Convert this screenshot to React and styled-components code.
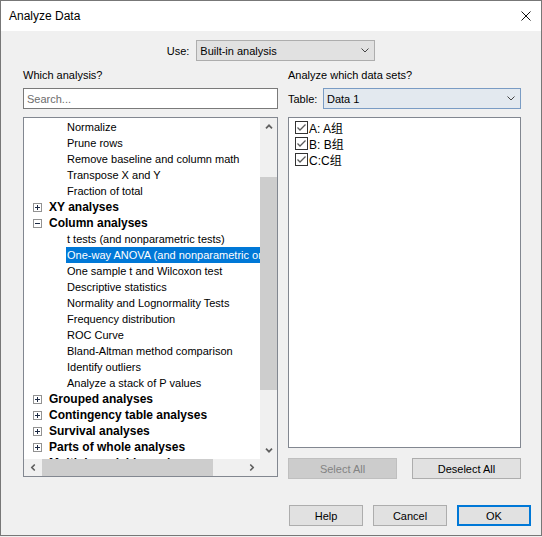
import React from 'react';
import styled, { createGlobalStyle } from 'styled-components';

const GlobalStyle = createGlobalStyle`
  html, body {
    margin: 0;
    padding: 0;
    background: #f0f0f0;
  }
  * { box-sizing: border-box; }
`;

const UI_FONT = '"Liberation Sans", "Noto Sans CJK SC", Arial, sans-serif';

const Dialog = styled.div`
  width: 542px;
  height: 536px;
  border: 1px solid #777777;
  background: #f0f0f0;
  display: flex;
  flex-direction: column;
  font-family: ${UI_FONT};
  font-size: 11px;
  color: #000;
`;

const TitleBar = styled.div`
  height: 30px;
  flex: none;
  background: #ffffff;
  display: flex;
  align-items: center;
  justify-content: space-between;
  padding: 0 10px 0 8px;
`;

const Title = styled.span`
  font-size: 12px;
  line-height: 16px;
`;

const CloseIcon = () => (
  <svg width="10" height="10" viewBox="0 0 10 10">
    <path d="M0.5 0.5 L9.5 9.5 M9.5 0.5 L0.5 9.5" stroke="#111" strokeWidth="1" fill="none" />
  </svg>
);

const Body = styled.div`
  flex: 1;
  display: flex;
  flex-direction: column;
`;

const UseRow = styled.div`
  margin-top: 9px;
  height: 21px;
  display: flex;
  align-items: center;
  justify-content: center;
  gap: 7px;
`;

const FieldLabel = styled.span`
  line-height: 16px;
  white-space: nowrap;
  flex: none;
  width: ${p => (p.$width ? `${p.$width}px` : 'auto')};
`;

const Combo = styled.div`
  height: 21px;
  width: ${p => (p.$width ? `${p.$width}px` : 'auto')};
  flex: ${p => (p.$width ? 'none' : '1')};
  display: flex;
  align-items: center;
  justify-content: space-between;
  padding: 0 5px 0 3px;
  background: ${p => (p.$focused ? '#e3e9ef' : '#e1e1e1')};
  border: 1px solid ${p => (p.$focused ? '#7a9cc4' : '#adadad')};
  line-height: 16px;
`;

const ComboArrow = () => (
  <svg width="8" height="5" viewBox="0 0 8 5">
    <path d="M0.5 0.5 L4 4 L7.5 0.5" stroke="#444" strokeWidth="1" fill="none" />
  </svg>
);

const Columns = styled.div`
  margin: 6px 0 0 22px;
  display: grid;
  grid-template-columns: 255px 233px;
  column-gap: 10px;
  align-items: start;
`;

const Column = styled.div`
  display: flex;
  flex-direction: column;
`;

const SectionLabel = styled.div`
  height: 16px;
  line-height: 16px;
`;

const SearchBox = styled.input`
  margin-top: 5px;
  height: 21px;
  width: 100%;
  border: 1px solid #7a7a7a;
  background: #fff;
  padding: 0 3px;
  font-family: ${UI_FONT};
  font-size: 11px;
  outline: none;
  &::placeholder { color: #6d6d6d; }
`;

const TableRow = styled.div`
  margin-top: 5px;
  height: 21px;
  display: flex;
  align-items: center;
`;

/* ---------- tree view ---------- */

const Tree = styled.div`
  margin-top: 8px;
  height: 360px;
  border: 1px solid #828790;
  background: #fff;
  display: grid;
  grid-template-columns: 1fr 17px;
  grid-template-rows: 1fr 17px;
  overflow: hidden;
`;

const TreeContent = styled.div`
  overflow: hidden;
  padding-top: 1px;
`;

const TreeRow = styled.div`
  height: 16px;
  display: flex;
  align-items: center;
  white-space: nowrap;
  padding-left: ${p => (p.$group ? '9px' : '42px')};
`;

const TreeLabel = styled.span`
  display: inline-block;
  height: 16px;
  line-height: 16px;
  padding: 0 2px 0 1px;
  font-weight: ${p => (p.$group ? 700 : 400)};
  font-size: ${p => (p.$group ? '12px' : '11px')};
  background: ${p => (p.$selected ? '#0078d7' : 'transparent')};
  color: ${p => (p.$selected ? '#ffffff' : '#000000')};
`;

const Expander = styled.span`
  width: 9px;
  height: 9px;
  flex: none;
  margin-right: 6px;
  border: 1px solid #929292;
  background: #fff;
  position: relative;
  &::before {
    content: '';
    position: absolute;
    left: 1px;
    top: 3px;
    width: 5px;
    height: 1px;
    background: #1c2a44;
  }
  &::after {
    content: '';
    display: ${p => (p.$open ? 'none' : 'block')};
    position: absolute;
    left: 3px;
    top: 1px;
    width: 1px;
    height: 5px;
    background: #1c2a44;
  }
`;

const VScroll = styled.div`
  background: #f0f0f0;
  display: flex;
  flex-direction: column;
`;

const HScroll = styled.div`
  background: #f0f0f0;
  display: flex;
  align-items: stretch;
`;

const ScrollCorner = styled.div`
  background: #f0f0f0;
`;

const ArrowCell = styled.div`
  width: 17px;
  height: 17px;
  flex: none;
  display: flex;
  align-items: center;
  justify-content: center;
`;

const VThumb = styled.div`
  margin-top: 42px;
  height: 213px;
  background: #cdcdcd;
  flex: none;
`;

const HThumb = styled.div`
  margin-left: 1px;
  width: 171px;
  background: #cdcdcd;
  flex: none;
`;

const Spacer = styled.div`
  flex: 1;
`;

const ArrowSvg = styled.svg`
  transform: rotate(${p => ({ up: 0, down: 180, left: -90, right: 90 }[p.$dir])}deg);
`;

const ScrollArrow = ({ dir }) => (
  <ArrowSvg $dir={dir} width="8" height="5" viewBox="0 0 8 5">
    <path d="M1 4.3 L4 1.3 L7 4.3" stroke="#606060" strokeWidth="1.7" fill="none" />
  </ArrowSvg>
);

/* ---------- data set list ---------- */

const DataList = styled.div`
  margin-top: 8px;
  height: 331px;
  border: 1px solid #828790;
  background: #fff;
  padding: 1px 0 0 6px;
`;

const DataRow = styled.label`
  height: 16px;
  display: flex;
  align-items: center;
  gap: 1px;
  font-size: 12px;
  white-space: nowrap;
`;

const CheckBox = styled.span`
  width: 13px;
  height: 13px;
  flex: none;
  border: 1px solid #333333;
  background: #fff;
  display: flex;
`;

const CheckMark = () => (
  <svg width="11" height="11" viewBox="0 0 11 11">
    <path d="M1.5 5.5 L4 8 L9.5 2.5" stroke="#5a5a5a" strokeWidth="1.3" fill="none" />
  </svg>
);

/* ---------- buttons ---------- */

const ButtonPair = styled.div`
  margin-top: 10px;
  display: flex;
  justify-content: space-between;
`;

const Button = styled.button`
  height: 21px;
  width: ${p => p.$width}px;
  padding: 0;
  font-family: ${UI_FONT};
  font-size: 11px;
  line-height: 16px;
  background: ${p => (p.disabled ? '#cccccc' : '#e1e1e1')};
  color: ${p => (p.disabled ? '#838383' : '#000000')};
  border: ${p => (p.$default ? '2px solid #0078d7' : `1px solid ${p.disabled ? '#bfbfbf' : '#adadad'}`)};
`;

const Footer = styled.div`
  margin-top: 26px;
  padding-right: 10px;
  display: flex;
  justify-content: flex-end;
  gap: 10px;
`;

const treeItems = [
  { label: 'Normalize' },
  { label: 'Prune rows' },
  { label: 'Remove baseline and column math' },
  { label: 'Transpose X and Y' },
  { label: 'Fraction of total' },
  { label: 'XY analyses', group: true },
  { label: 'Column analyses', group: true, open: true },
  { label: 't tests (and nonparametric tests)' },
  { label: 'One-way ANOVA (and nonparametric or mixed)', selected: true },
  { label: 'One sample t and Wilcoxon test' },
  { label: 'Descriptive statistics' },
  { label: 'Normality and Lognormality Tests' },
  { label: 'Frequency distribution' },
  { label: 'ROC Curve' },
  { label: 'Bland-Altman method comparison' },
  { label: 'Identify outliers' },
  { label: 'Analyze a stack of P values' },
  { label: 'Grouped analyses', group: true },
  { label: 'Contingency table analyses', group: true },
  { label: 'Survival analyses', group: true },
  { label: 'Parts of whole analyses', group: true },
  { label: 'Multiple variable analyses', group: true },
];

const dataSets = ['A: A组', 'B: B组', 'C:C组'];

export default function App() {
  return (
    <>
      <GlobalStyle />
      <Dialog>
        <TitleBar>
          <Title>Analyze Data</Title>
          <CloseIcon />
        </TitleBar>
        <Body>
          <UseRow>
            <FieldLabel>Use:</FieldLabel>
            <Combo $width={179}>
              <span>Built-in analysis</span>
              <ComboArrow />
            </Combo>
          </UseRow>

          <Columns>
            <Column>
              <SectionLabel>Which analysis?</SectionLabel>
              <SearchBox placeholder="Search..." />
              <Tree>
                <TreeContent>
                  {treeItems.map(item => (
                    <TreeRow key={item.label} $group={item.group}>
                      {item.group && <Expander $open={item.open} />}
                      <TreeLabel $group={item.group} $selected={item.selected}>
                        {item.label}
                      </TreeLabel>
                    </TreeRow>
                  ))}
                </TreeContent>
                <VScroll>
                  <ArrowCell><ScrollArrow dir="up" /></ArrowCell>
                  <VThumb />
                  <Spacer />
                  <ArrowCell><ScrollArrow dir="down" /></ArrowCell>
                </VScroll>
                <HScroll>
                  <ArrowCell><ScrollArrow dir="left" /></ArrowCell>
                  <HThumb />
                  <Spacer />
                  <ArrowCell><ScrollArrow dir="right" /></ArrowCell>
                </HScroll>
                <ScrollCorner />
              </Tree>
            </Column>

            <Column>
              <SectionLabel>Analyze which data sets?</SectionLabel>
              <TableRow>
                <FieldLabel $width={35}>Table:</FieldLabel>
                <Combo $focused>
                  <span>Data 1</span>
                  <ComboArrow />
                </Combo>
              </TableRow>
              <DataList>
                {dataSets.map(name => (
                  <DataRow key={name}>
                    <CheckBox><CheckMark /></CheckBox>
                    <span>{name}</span>
                  </DataRow>
                ))}
              </DataList>
              <ButtonPair>
                <Button $width={109} disabled>Select All</Button>
                <Button $width={109}>Deselect All</Button>
              </ButtonPair>
            </Column>
          </Columns>

          <Footer>
            <Button $width={74}>Help</Button>
            <Button $width={74}>Cancel</Button>
            <Button $width={74} $default>OK</Button>
          </Footer>
        </Body>
      </Dialog>
    </>
  );
}
